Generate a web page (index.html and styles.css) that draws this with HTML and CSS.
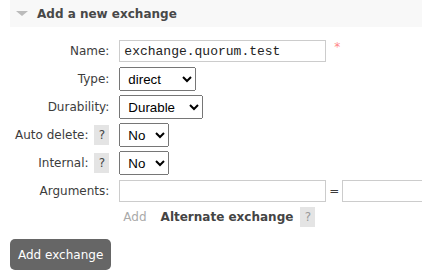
FILE: index.html
```html
<!DOCTYPE html>
<html lang="en">
<head>
    <meta charset="UTF-8">
    <title>Add a new exchange</title>
    <link rel="stylesheet" href="styles.css">
</head>
<body>

    <div class="section">
        <h2><span class="arrow"></span>Add a new exchange</h2>
        <form class="hider">
            <table class="form">
                <tr>
                    <th><label for="name">Name:</label></th>
                    <td><input id="name" type="text" class="text-field" value="exchange.quorum.test"><span class="mand">*</span></td>
                </tr>
                <tr>
                    <th><label for="type">Type:</label></th>
                    <td>
                        <select id="type">
                            <option>direct</option>
                            <option>fanout</option>
                            <option>headers</option>
                            <option>topic</option>
                        </select>
                    </td>
                </tr>
                <tr>
                    <th><label for="durable">Durability:</label></th>
                    <td>
                        <select id="durable">
                            <option>Durable</option>
                            <option>Transient</option>
                        </select>
                    </td>
                </tr>
                <tr>
                    <th><label for="auto_delete">Auto delete:</label> <span class="help">?</span></th>
                    <td>
                        <select id="auto_delete">
                            <option>No</option>
                            <option>Yes</option>
                        </select>
                    </td>
                </tr>
                <tr>
                    <th><label for="internal">Internal:</label> <span class="help">?</span></th>
                    <td>
                        <select id="internal">
                            <option>No</option>
                            <option>Yes</option>
                        </select>
                    </td>
                </tr>
                <tr>
                    <th class="top"><label>Arguments:</label></th>
                    <td>
                        <div class="multifield">
                            <input type="text" class="text-field">
                            <span class="eq">=</span>
                            <input type="text" class="text-field value-field">
                        </div>
                        <div class="arg-shortcuts">
                            <span class="argument-link">Add</span>
                            <span class="shortcut">Alternate exchange</span>
                            <span class="help faded">?</span>
                        </div>
                    </td>
                </tr>
            </table>
            <input type="submit" class="btn" value="Add exchange">
        </form>
    </div>

</body>
</html>
```

FILE: styles.css
```css
body {
    font-family: "DejaVu Sans", Verdana, sans-serif;
    font-size: 12px;
    color: #3c3c3c;
    margin: 0;
    background-color: #fff;
    overflow: hidden;
}

.section {
    padding-left: 10px;
}

h2 {
    display: flex;
    align-items: center;
    margin: 0;
    height: 27px;
    padding-left: 6px;
    background-color: #f8f8f8;
    font-size: 12px;
    font-weight: bold;
    color: #484848;
}

.arrow {
    width: 0;
    height: 0;
    margin-right: 9px;
    border-left: 6px solid transparent;
    border-right: 6px solid transparent;
    border-top: 5px solid #bbb;
}

.hider {
    padding-top: 10px;
}

table.form {
    border-collapse: collapse;
    margin-left: 5px;
}

table.form th {
    text-align: right;
    font-weight: normal;
    padding: 0 10px 0 0;
    height: 28px;
    white-space: nowrap;
    vertical-align: middle;
}

table.form th.top {
    vertical-align: top;
    line-height: 28px;
}

table.form td {
    padding: 0;
    vertical-align: middle;
}

.help {
    display: inline-block;
    width: 15px;
    height: 20px;
    line-height: 20px;
    text-align: center;
    background-color: #e4e4e4;
    color: #444;
    margin-left: 2px;
}

.help.faded {
    color: #999;
    margin-left: 7px;
}

.text-field {
    width: 207px;
    height: 22px;
    box-sizing: border-box;
    border: 1px solid #ccc;
    padding: 1px 4px 0;
    font-family: "Liberation Mono", "Courier New", monospace;
    font-size: 13px;
    color: #222;
    margin: 0;
}

/* cut off by the window edge, like the original */
.value-field {
    width: 80px;
    border-right: none;
}

.mand {
    color: #f88;
    margin-left: 8px;
    vertical-align: 4px;
}

select {
    font-family: "Liberation Sans", Arial, sans-serif;
    font-size: 13.33px;
    color: #000;
    margin: 0;
    height: 24px;
    padding: 0 2px 0 4px;
}

.multifield {
    display: flex;
    align-items: center;
    gap: 3px;
    height: 28px;
}

.eq {
    font-size: 12px;
}

.arg-shortcuts {
    display: flex;
    align-items: center;
    height: 24px;
    padding-left: 4px;
}

.argument-link {
    color: #aaa;
    margin-right: 14px;
}

.shortcut {
    font-weight: bold;
    color: #444;
}

.btn {
    margin-top: 10px;
    font-family: "DejaVu Sans", Verdana, sans-serif;
    font-size: 12px;
    color: #fff;
    background-color: #666;
    border: none;
    border-radius: 5px;
    padding: 0 8px;
    height: 31px;
}
```
